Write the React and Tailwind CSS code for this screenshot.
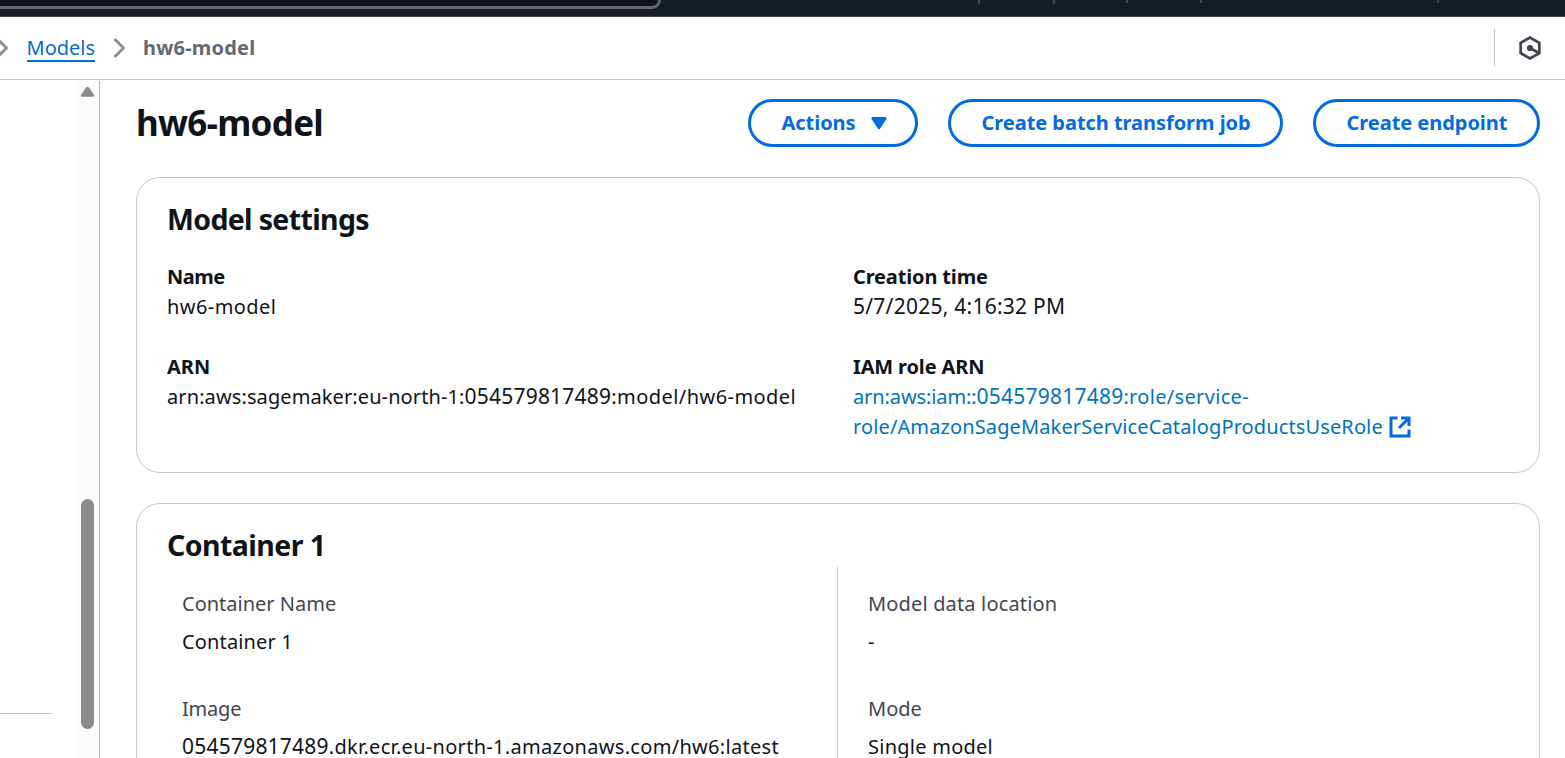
import React from "react";

function Chevron() {
  return (
    <svg className="h-[22px] w-[14px] shrink-0" viewBox="0 0 14 22" fill="none" stroke="#8c8c94" strokeWidth="2.8">
      <path d="M2.5 2 11.5 11 2.5 20" />
    </svg>
  );
}

function Button({ className, children }) {
  return (
    <button
      className={`flex h-12 shrink-0 items-center rounded-full border-3 border-[#006ce0] pl-[30.5px] text-[20px] leading-[30px] font-bold tracking-[-0.04px] whitespace-nowrap text-[#006ce0] ${className}`}
    >
      {children}
    </button>
  );
}

function Account() {
  return <span className="text-[21px] leading-none tracking-[0.22px]">054579817489</span>;
}

function Field({ label, labelClass = "", className = "", children }) {
  return (
    <div>
      <div className={`font-bold ${labelClass}`}>{label}</div>
      <div className={`whitespace-nowrap ${className}`}>{children}</div>
    </div>
  );
}

function Detail({ label, labelClass = "", className = "", children }) {
  return (
    <div className="flex flex-col gap-2 whitespace-nowrap">
      <div className={`text-[#424650] ${labelClass}`}>{label}</div>
      <div className={`h-[30px] ${className}`}>{children}</div>
    </div>
  );
}

function TopBar() {
  return (
    <div className="flex h-[17px] shrink-0 items-start border-b border-[#424650] bg-[#161d26]">
      <div className="h-[9px] w-[661px] rounded-br-[11px] border-r-3 border-b-3 border-[#656871] bg-[#0f141a]" />
      <div className="ml-[317px] h-1 w-[75px] border-l-2 border-[#424650]" />
      <div className="h-1 w-[73px] border-l-2 border-[#424650]" />
      <div className="h-[3px] w-[74px] border-l-2 border-[#424650]" />
      <div className="h-[3px] w-[237px] border-l-2 border-[#424650]" />
      <div className="h-[3px] border-l-2 border-[#424650]" />
    </div>
  );
}

export default function App() {
  return (
    <div className="flex h-[758px] w-[1565px] flex-col overflow-hidden bg-white font-['Noto_Sans',sans-serif] text-[20px] leading-[30px] text-[#0f141a]">
      <TopBar />
      <header className="flex h-[63px] shrink-0 items-center justify-between border-b border-[#c6c6cd]">
        <nav className="-ml-[5px] flex items-center">
          <Chevron />
          <a className="ml-[17.5px] border-b-2 border-[#006ce0] pt-px leading-[26px] text-[#006ce0]"><span className="block h-[25px]">Models</span></a>
          <span className="ml-[17px] flex"><Chevron /></span>
          <span className="ml-[17px] font-bold tracking-[0.2px] text-[#656871]">hw6-model</span>
        </nav>
        <div className="mb-px flex h-[37px] w-[71px] items-center border-l border-[#c6c6cd] pl-[23px]">
          <svg className="mt-px h-[24px] w-[24px]" viewBox="0 0 24 24" fill="none" stroke="#424650" strokeWidth="2.8">
            <path d="M12 1.6 21.3 6.8V17.2L12 22.4 2.7 17.2V6.8Z" />
            <path d="M12 12 20 16.5" />
            <circle cx="12" cy="12" r="3.1" fill="#424650" stroke="none" />
          </svg>
        </div>
      </header>
      <div className="flex min-h-0 flex-1">
        <aside className="mt-px flex w-[100px] shrink-0 border-r border-[#b4b4bb]">
          <div className="w-[76px] pt-[632px]">
            <div className="w-[52px] border-t border-[#c6c6cd]" />
          </div>
          <div className="flex w-[23px] flex-col items-center bg-[#fcfcfc] pt-[5px]">
            <svg className="h-[12px] w-[15px]" viewBox="0 0 16 12" fill="#8b8b8b">
              <path d="M6.5 1.2Q8 .2 9.5 1.2L14.8 8.6Q15.8 11 14 11H2Q.2 11 1.2 8.6Z" />
            </svg>
            <div className="mt-[401px] h-[230px] w-[13px] rounded-full bg-[#8b8b8b]" />
          </div>
        </aside>
        <main className="min-w-0 flex-1 pt-[19px] pr-[25px] pl-[36px]">
          <div className="flex h-12 items-center justify-between">
            <h1 className="text-[35px] leading-[46px] font-bold tracking-[-0.7px] whitespace-nowrap">hw6-model</h1>
            <div className="flex gap-[30px]">
              <Button className="w-[170px] justify-start">
                Actions
                <svg className="ml-[15.5px] h-[13px] w-[16px]" viewBox="0 0 16 13" fill="#006ce0">
                  <path d="M1.6 0H14.4Q16.2.5 15.3 2.2L9 11.8Q8 13 7 11.8L.7 2.2Q-.2.5 1.6 0Z" />
                </svg>
              </Button>
              <Button className="w-[335px]">Create batch transform job</Button>
              <Button className="w-[227px]">Create endpoint</Button>
            </div>
          </div>
          <section className="mt-[30px] h-[296px] rounded-[24px] border border-[#c6c6cd] px-[30px] pt-[23px]">
            <h2 className="text-[28.5px] leading-[36px] font-bold tracking-[-0.65px]">Model settings</h2>
            <div className="mt-[25px] grid grid-cols-2 gap-x-[30px] gap-y-[30px]">
              <Field label="Name" labelClass="tracking-[-0.5px]" className="tracking-[0.42px]">hw6-model</Field>
              <Field label="Creation time" labelClass="tracking-[-0.15px]" className="h-[30px] text-[21px] leading-[28px] tracking-[0.25px]">5/7/2025, 4:16:32 PM</Field>
              <Field label="ARN" className="h-[30px]">
                <span className="tracking-[0.1px]">arn:aws:sagemaker:eu-north-1:</span>
                <Account />
                <span className="tracking-[0.44px]">:model/hw6-model</span>
              </Field>
              <Field label="IAM role ARN" labelClass="tracking-[-0.15px]">
                <a className="text-[#0073bb]">
                  <span className="block h-[30px]">
                    <span className="tracking-[-0.1px]">arn:aws:iam::</span>
                    <Account />
                    <span className="tracking-[0.33px]">:role/service-</span>
                  </span>
                  <span className="tracking-[0.12px]">role/AmazonSageMakerServiceCatalogProductsUseRole</span>
                  <svg className="ml-[6px] inline-block h-[22px] w-[22px] align-[-4px]" viewBox="0 0 22 22" fill="none" stroke="#006ce0" strokeWidth="3">
                    <path d="M8.5 2H2V20H20V13.5M12 2H20V10M20 2 10 12" />
                  </svg>
                </a>
              </Field>
            </div>
          </section>
          <section className="mt-[30px] h-[400px] rounded-t-[24px] border border-[#c6c6cd] px-[30px] pt-[23px]">
            <h2 className="text-[28.5px] leading-[36px] font-bold tracking-[-0.55px]">Container 1</h2>
            <div className="mt-[4px] grid grid-cols-[670px_1fr]">
              <div className="flex h-[300px] flex-col gap-[37px] pt-[22px] pl-[15px]">
                <Detail label="Container Name" className="tracking-[0.15px]">Container 1</Detail>
                <Detail label="Image" labelClass="tracking-[-0.2px]">
                  <Account />
                  <span className="tracking-[0.3px]">.dkr.ecr.eu-north-1.amazonaws.com/hw6:latest</span>
                </Detail>
              </div>
              <div className="flex h-[300px] flex-col gap-[37px] border-l border-[#c6c6cd] pt-[22px] pl-[30px]">
                <Detail label="Model data location" labelClass="tracking-[0.16px]">-</Detail>
                <Detail label="Mode" className="tracking-[0.25px]">Single model</Detail>
              </div>
            </div>
          </section>
        </main>
      </div>
    </div>
  );
}
